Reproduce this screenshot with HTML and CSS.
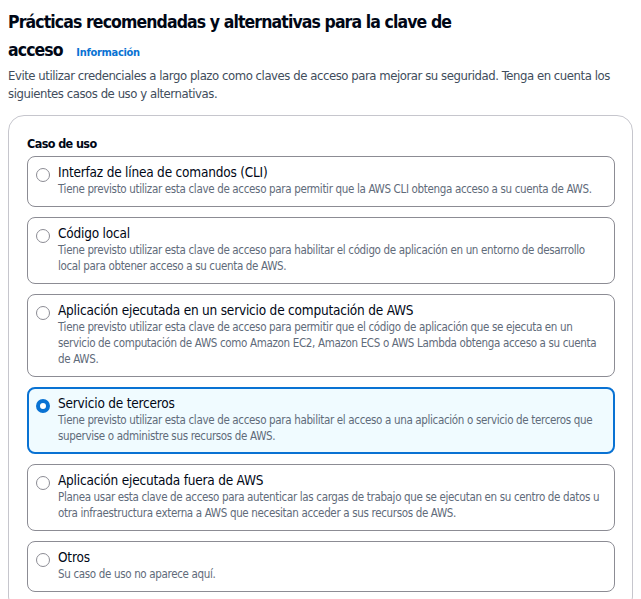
FILE: index.html
```html
<!DOCTYPE html>
<html lang="es">
<head>
<meta charset="utf-8">
<link rel="stylesheet" href="styles.css">
</head>
<body>
<header class="page-header">
  <h1 class="title">Prácticas recomendadas y alternativas para la clave de<br>acceso <a class="info" href="#">Información</a></h1>
  <p class="lead">Evite utilizar credenciales a largo plazo como claves de acceso para mejorar su seguridad. Tenga en cuenta los siguientes casos de uso y alternativas.</p>
</header>
<section class="container">
  <div class="field-label">Caso de uso</div>
  <div class="tiles">
    <label class="tile">
      <span class="radio"></span>
      <span class="tile-body">
        <span class="tile-title">Interfaz de línea de comandos (CLI)</span>
        <span class="tile-desc">Tiene previsto utilizar esta clave de acceso para permitir que la AWS CLI obtenga acceso a su cuenta de AWS.</span>
      </span>
    </label>
    <label class="tile">
      <span class="radio"></span>
      <span class="tile-body">
        <span class="tile-title">Código local</span>
        <span class="tile-desc">Tiene previsto utilizar esta clave de acceso para habilitar el código de aplicación en un entorno de desarrollo local para obtener acceso a su cuenta de AWS.</span>
      </span>
    </label>
    <label class="tile">
      <span class="radio"></span>
      <span class="tile-body">
        <span class="tile-title">Aplicación ejecutada en un servicio de computación de AWS</span>
        <span class="tile-desc">Tiene previsto utilizar esta clave de acceso para permitir que el código de aplicación que se ejecuta en un servicio de computación de AWS como Amazon EC2, Amazon ECS o AWS Lambda obtenga acceso a su cuenta de AWS.</span>
      </span>
    </label>
    <label class="tile selected">
      <span class="radio checked"></span>
      <span class="tile-body">
        <span class="tile-title">Servicio de terceros</span>
        <span class="tile-desc">Tiene previsto utilizar esta clave de acceso para habilitar el acceso a una aplicación o servicio de terceros que supervise o administre sus recursos de AWS.</span>
      </span>
    </label>
    <label class="tile">
      <span class="radio"></span>
      <span class="tile-body">
        <span class="tile-title">Aplicación ejecutada fuera de AWS</span>
        <span class="tile-desc">Planea usar esta clave de acceso para autenticar las cargas de trabajo que se ejecutan en su centro de datos u otra infraestructura externa a AWS que necesitan acceder a sus recursos de AWS.</span>
      </span>
    </label>
    <label class="tile">
      <span class="radio"></span>
      <span class="tile-body">
        <span class="tile-title">Otros</span>
        <span class="tile-desc">Su caso de uso no aparece aquí.</span>
      </span>
    </label>
  </div>
</section>
</body>
</html>
```
FILE: styles.css
```css
* { box-sizing: border-box; }
html, body { background: #ffffff; }
body {
  margin: 8px;
  font-family: "Liberation Sans Narrow", "DejaVu Sans Condensed", "DejaVu Sans", sans-serif;
  color: #000716;
}
.page-header { margin: 0; }
.title {
  margin: 0;
  padding-top: 0;
  font-size: 17.5px;
  line-height: 28px;
  font-weight: 700;
  letter-spacing: -0.9px;
  color: #000716;
}
.info {
  font-size: 11px;
  font-weight: 700;
  letter-spacing: -0.3px;
  color: #0972d3;
  text-decoration: none;
  margin-left: 9px;
}
.lead {
  margin: 0;
  font-size: 13px;
  line-height: 18px;
  letter-spacing: -0.45px;
  color: #414d5c;
}
.container {
  margin-top: 12px;
  border: 1px solid #c6c6cd;
  border-radius: 16px;
  padding: 18px 17px 20px 18px;
}
.field-label {
  font-size: 12.5px;
  line-height: 20px;
  font-weight: 700;
  letter-spacing: -0.6px;
  color: #000716;
  margin-bottom: 2px;
}
.tiles {
  display: flex;
  flex-direction: column;
  gap: 10px;
}
.tile {
  display: flex;
  align-items: flex-start;
  gap: 8px;
  border: 1px solid #8c8c94;
  border-radius: 8px;
  padding: 7px 12px 9px 8px;
}
.tile.selected {
  border: 2px solid #0972d3;
  background: #f0fbff;
  padding: 6px 11px 8px 7px;
}
.radio {
  flex: none;
  width: 14px;
  height: 14px;
  margin-top: 4px;
  border: 1px solid #8c8c94;
  border-radius: 50%;
  background: #fff;
}
.radio.checked {
  border: 4px solid #0972d3;
}
.tile-body {
  display: flex;
  flex-direction: column;
}
.tile-title {
  font-size: 13.5px;
  line-height: 17px;
  letter-spacing: -0.2px;
  color: #000716;
}
.tile-desc {
  font-size: 11.5px;
  line-height: 16px;
  letter-spacing: -0.34px;
  color: #5f6b7a;
}
```
